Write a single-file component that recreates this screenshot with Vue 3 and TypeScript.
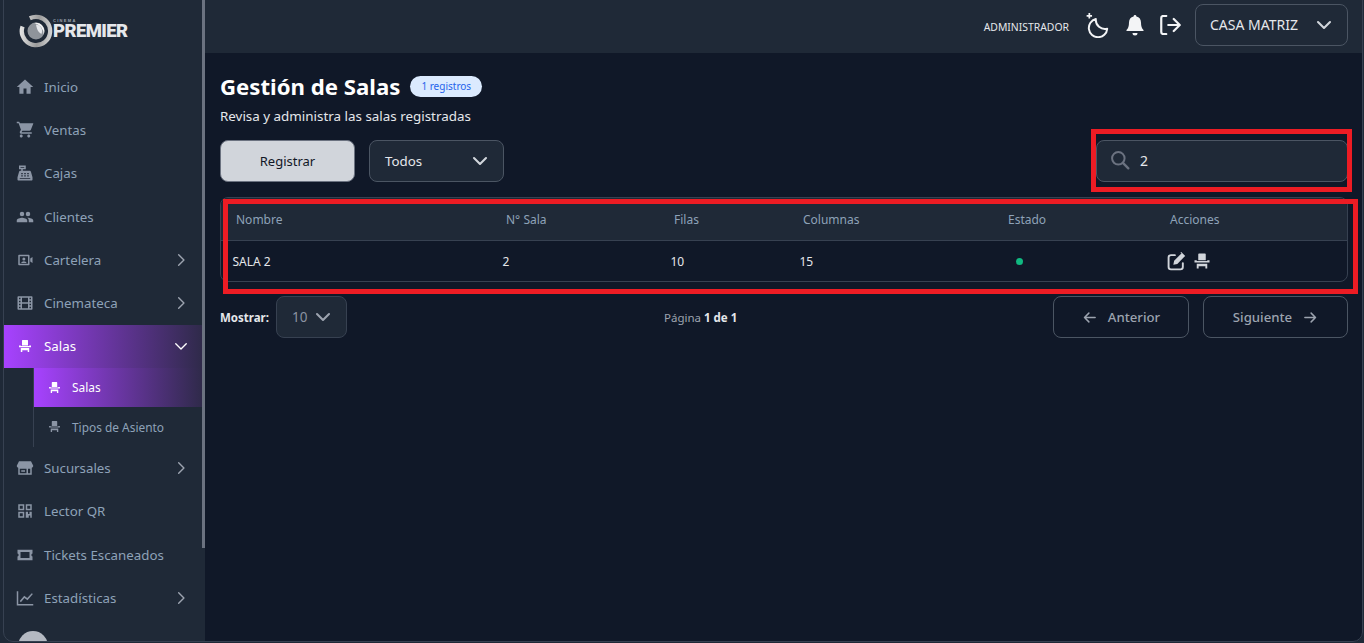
<script setup lang="ts">
type MenuItem = { label: string; icon: string; arrow?: boolean }

const topItems: MenuItem[] = [
  { label: 'Inicio', icon: 'home' },
  { label: 'Ventas', icon: 'cart' },
  { label: 'Cajas', icon: 'register' },
  { label: 'Clientes', icon: 'people' },
  { label: 'Cartelera', icon: 'camera', arrow: true },
  { label: 'Cinemateca', icon: 'film', arrow: true },
]

const bottomItems: MenuItem[] = [
  { label: 'Sucursales', icon: 'store', arrow: true },
  { label: 'Lector QR', icon: 'qr' },
  { label: 'Tickets Escaneados', icon: 'ticket' },
  { label: 'Estadísticas', icon: 'chart', arrow: true },
]

const icons: Record<string, string> = {
  home: 'M10 21v-7h4v7h5.500v-9H23L12 2 1 12h3.500v9z',
  cart: 'M7 18c-1.100 0-2 .9-2 2s.9 2 2 2 2-.9 2-2-.9-2-2-2zm10 0c-1.100 0-2 .9-2 2s.9 2 2 2 2-.9 2-2-.9-2-2-2zM1 1v2h2.500l3.100 8.600-1.300 2.400c-.2.3-.3.6-.3 1 0 1.100.9 2 2 2h14v-2H7.400l1.100-2h9.500c.7 0 1.400-.4 1.700-1L23 3.500V3H5.200l-.9-2z',
  register: 'M4 2h9v5H9v2h9c1 0 1.700.6 2 1.500l2 7V21c0 .6-.4 1-1 1H3c-.6 0-1-.4-1-1v-3.500l2-7C4.300 9.600 5 9 6 9h1V7H4zm2 2v1h5V4zm1 8v1.500h2V12zm4 0v1.500h2V12zm4 0v1.500h2V12zm-8 3v1.500h2V15zm4 0v1.500h2V15zm4 0v1.500h2V15zM5 19v1h14v-1z',
  people: 'M16 11a3 3 0 1 0 0-6 3 3 0 0 0 0 6zm-8 0a3 3 0 1 0 0-6 3 3 0 0 0 0 6zm0 2c-2.300 0-7 1.200-7 3.500V19h14v-2.500C15 14.200 10.300 13 8 13zm8 0h-1c1.200.8 2 2 2 3.500V19h6v-2.500c0-2.300-4.700-3.500-7-3.500z',
  camera: 'M4 5h13c.6 0 1 .4 1 1v12c0 .6-.4 1-1 1H4c-.6 0-1-.4-1-1V6c0-.6.4-1 1-1zm1 2v10h11V7zm5.500 1.500a2 2 0 1 1 0 4 2 2 0 0 1 0-4zM7 16c0-1.500 2-2.500 3.500-2.500S14 14.500 14 16zm12-6 3-2v8l-3-2z',
  film: 'M3 3h18c.6 0 1 .4 1 1v16c0 .6-.4 1-1 1H3c-.6 0-1-.4-1-1V4c0-.6.4-1 1-1zm1 2v2h2V5zm14 0v2h2V5zM8 5v6h8V5zM4 9v2h2V9zm14 0v2h2V9zM4 13v2h2v-2zm14 0v2h2v-2zM8 13v6h8v-6zm-4 4v2h2v-2zm14 0v2h2v-2z',
  store: 'M4 3h16l3 6c0 1.400-1 2.500-2 2.800V21H3v-9.200C2 11.500 1 10.400 1 9zm1 10v6h9v-6zm11 0v6h3v-6zM7 15h5v2H7z',
  qr: 'M3 3h8v8H3zm2 2v4h4V5zm8-2h8v8h-8zm2 2v4h4V5zM3 13h8v8H3zm2 2v4h4v-4zm8-2h3v3h2v-3h3v8h-2v-3h-2v3h-4z',
  ticket: 'M2 5h20v5c-1 .3-1.500 1-1.500 2s.5 1.700 1.500 2v5H2v-5c1-.3 1.500-1 1.500-2S3 10.300 2 10zm4 3v8h12V8z',
  chart: 'M1 3h2v17h20v2H1zm4 13 6-7 4 3 6-6.500 1.500 1.300-7.200 8.200-4-3-4.800 5.500z',
  chair: 'M8 2h8c.6 0 1 .4 1 1v8H7V3c0-.6.4-1 1-1zM2 11h3v1h14v-1h3v3H2zm3 4.500h14V22h-2.500v-3h-9v3H5z',
}

const columns = ['Nombre', 'N° Sala', 'Filas', 'Columnas', 'Estado', 'Acciones']
</script>

<template>
  <div class="app">
    <aside class="sidebar">
      <div class="logo">
        <svg class="logo-mark" viewBox="0 0 36 36">
          <defs>
            <linearGradient id="ring" x1="0" y1="0" x2="1" y2="1">
              <stop offset="0" stop-color="#f5f5f5" />
              <stop offset="0.55" stop-color="#9a9a9a" />
              <stop offset="1" stop-color="#e5e5e5" />
            </linearGradient>
          </defs>
          <circle cx="18" cy="18" r="15" fill="none" stroke="url(#ring)" stroke-width="4.500" stroke-dasharray="62 12" transform="rotate(-40 18 18)" />
          <circle cx="18" cy="18" r="9" fill="#8f949b" />
          <path d="M16 9.500a9 9 0 0 1 10 12.500A12 12 0 0 0 16 9.500z" fill="#f5f5f5" />
          <path d="M21 12a8 8 0 0 1 3 9c-3-1-5-4-6-10z" fill="#e5e7eb" />
        </svg>
        <div class="logo-text">
          <span class="logo-small">CINEMA</span>
          <span class="logo-big">PREMIER</span>
        </div>
      </div>

      <nav class="menu">
        <a v-for="item in topItems" :key="item.label" class="menu-item">
          <svg class="menu-icon" viewBox="0 0 24 24"><path :d="icons[item.icon]" fill="currentColor" fill-rule="evenodd" /></svg>
          <span class="menu-label">{{ item.label }}</span>
          <svg v-if="item.arrow" class="arrow" viewBox="0 0 24 24"><path d="M8 3l9 9-9 9" /></svg>
        </a>

        <a class="menu-item active">
          <svg class="menu-icon chair-icon" viewBox="-3 -3 30 30"><path :d="icons.chair" fill="currentColor" /></svg>
          <span class="menu-label">Salas</span>
          <svg class="arrow down" viewBox="0 0 24 24"><path d="M3 8l9 9 9-9" /></svg>
        </a>
        <div class="submenu">
          <a class="sub-item active">
            <svg class="sub-icon" viewBox="0 0 24 24"><path :d="icons.chair" fill="currentColor" /></svg>
            <span>Salas</span>
          </a>
          <a class="sub-item">
            <svg class="sub-icon" viewBox="0 0 24 24"><path :d="icons.chair" fill="currentColor" /></svg>
            <span>Tipos de Asiento</span>
          </a>
        </div>

        <a v-for="item in bottomItems" :key="item.label" class="menu-item">
          <svg class="menu-icon" viewBox="0 0 24 24"><path :d="icons[item.icon]" fill="currentColor" fill-rule="evenodd" /></svg>
          <span class="menu-label">{{ item.label }}</span>
          <svg v-if="item.arrow" class="arrow" viewBox="0 0 24 24"><path d="M8 3l9 9-9 9" /></svg>
        </a>
      </nav>

      <div class="avatar"></div>
      <div class="scrollbar"></div>
    </aside>

    <div class="content">
      <header class="topbar">
        <span class="role">ADMINISTRADOR</span>
        <svg class="top-icon moon" viewBox="0 0 24 24">
          <path d="M20.500 15.500A8.500 8.500 0 0 1 10 6.500a8.500 8.500 0 1 0 10.500 9z" fill="none" stroke="currentColor" stroke-width="1.800" stroke-linejoin="round" />
          <path d="M4 1v5M1.500 3.500h5" stroke="currentColor" stroke-width="1.600" />
        </svg>
        <svg class="top-icon bell" viewBox="3 2 18 21">
          <path d="M12 2c.8 0 1.400.6 1.400 1.400 3 .6 4.600 3 4.600 6 0 4 .8 5.600 2.500 7.600v1H3.500v-1C5.200 15 6 13.400 6 9.400c0-3 1.600-5.400 4.600-6C10.600 2.600 11.200 2 12 2zM9.500 20h5a2.500 2.500 0 0 1-5 0z" fill="currentColor" />
        </svg>
        <svg class="top-icon exit" viewBox="2 2 20.500 20">
          <path d="M8 3H5a2 2 0 0 0-2 2v14a2 2 0 0 0 2 2h3M10 12h11M15.500 6l6 6-6 6" fill="none" stroke="currentColor" stroke-width="2.200" stroke-linecap="round" stroke-linejoin="round" />
        </svg>
        <div class="branch">
          <span>CASA MATRIZ</span>
          <svg class="chevron" viewBox="0 0 24 24"><path d="M4 8l8 8 8-8" /></svg>
        </div>
      </header>

      <main class="page">
        <div class="title-row">
          <h1>Gestión de Salas</h1>
          <span class="badge">1 registros</span>
        </div>
        <p class="subtitle">Revisa y administra las salas registradas</p>

        <div class="toolbar">
          <button class="btn-register">Registrar</button>
          <div class="filter">
            <span>Todos</span>
            <svg class="chevron" viewBox="0 0 24 24"><path d="M4 8l8 8 8-8" /></svg>
          </div>
          <div class="search">
            <svg class="search-icon" viewBox="0 0 24 24">
              <circle cx="10" cy="10" r="7.500" fill="none" stroke="currentColor" stroke-width="2.400" />
              <path d="M15.500 15.500L22 22" stroke="currentColor" stroke-width="2.800" stroke-linecap="round" />
            </svg>
            <span>2</span>
            <div class="mark mark-search"></div>
          </div>
        </div>

        <div class="table-wrap">
          <div class="table-row table-head">
            <div v-for="col in columns" :key="col" class="head-cell">{{ col }}</div>
          </div>
          <div class="table-row table-body">
            <div class="cell">SALA 2</div>
            <div class="cell">2</div>
            <div class="cell">10</div>
            <div class="cell">15</div>
            <div class="cell state"><span class="dot"></span></div>
            <div class="cell actions">
              <svg class="act-edit" viewBox="0 0 24 24">
                <path d="M10 4H5a3 3 0 0 0-3 3v12a3 3 0 0 0 3 3h12a3 3 0 0 0 3-3v-5" fill="none" stroke="currentColor" stroke-width="2.400" stroke-linecap="round" />
                <path d="M8 16l1-5L18.500 1.500l4 4L13 15zM17 1l1-1 5 5-1 1z" fill="currentColor" />
              </svg>
              <svg class="act-chair" viewBox="0 0 24 24"><path :d="icons.chair" fill="currentColor" /></svg>
            </div>
          </div>
          <div class="mark mark-table"></div>
        </div>

        <div class="pager">
          <div class="show">
            <label>Mostrar:</label>
            <div class="size">
              <span>10</span>
              <svg class="chevron" viewBox="0 0 24 24"><path d="M4 8l8 8 8-8" /></svg>
            </div>
          </div>
          <div class="page-info">Página <b>1 de 1</b></div>
          <div class="pager-btns">
            <button class="btn-page prev">
              <svg viewBox="0 0 24 24"><path d="M21 12H4M11 5l-7 7 7 7" /></svg>
              Anterior
            </button>
            <button class="btn-page next">
              Siguiente
              <svg viewBox="0 0 24 24"><path d="M3 12h17M13 5l7 7-7 7" /></svg>
            </button>
          </div>
        </div>
      </main>
    </div>
    <div class="frame"></div>
  </div>
</template>

<style>
html,
body {
  margin: 0;
  height: 100%;
  overflow: hidden;
  background: #101828;
}
</style>

<style scoped>
.app {
  position: relative;
  display: flex;
  width: 1364px;
  height: 643px;
  overflow: hidden;
  font-family: "Noto Sans", "Open Sans", sans-serif;
  color: #e5e7eb;
  background: #101828;
}

/* window edge drawn over the whole page */
.frame {
  position: absolute;
  left: 3px;
  top: -12px;
  width: 1360px;
  height: 654px;
  box-sizing: border-box;
  border: 1px solid #374151;
  border-radius: 10px;
  box-shadow: 0 0 0 6px #1f2937;
  pointer-events: none;
}

.sidebar {
  position: relative;
  flex: 0 0 205px;
  box-sizing: border-box;
  height: 643px;
  padding-left: 3px;
  background: #1f2937;
  overflow: hidden;
}

.logo {
  display: flex;
  align-items: center;
  height: 65.500px;
  padding-left: 16px;
  padding-bottom: 4px;
  box-sizing: border-box;
}

.logo-mark {
  width: 34px;
  height: 34px;
  flex: none;
}

.logo-text {
  display: flex;
  flex-direction: column;
  margin-top: -3px;
}

.logo-small {
  font-family: "Liberation Sans", sans-serif;
  font-size: 4px;
  font-weight: 700;
  line-height: 5px;
  letter-spacing: 1.300px;
  color: #9ca3af;
}

.logo-big {
  font-family: "Roboto", sans-serif;
  font-size: 18.500px;
  font-weight: 900;
  line-height: 17px;
  letter-spacing: -0.600px;
  color: #e5e7eb;
}

.menu {
  display: flex;
  flex-direction: column;
  width: 199px;
}

.menu-item {
  display: flex;
  align-items: center;
  height: 43.200px;
  padding-left: 13px;
  padding-right: 14px;
  box-sizing: border-box;
  color: #8ea2b8;
  font-size: 13.300px;
}

.menu-item.active {
  height: 43px;
  margin-left: 1px;
  padding-left: 12px;
  color: #fff;
  background: linear-gradient(90deg, #a742ff 0%, #2f2a4a 100%);
}

.menu-icon {
  width: 18px;
  height: 18px;
  flex: none;
  color: #8b95a5;
}

.active .menu-icon {
  color: #fff;
}

.menu-label {
  margin-left: 10px;
  flex: 1;
  white-space: nowrap;
}

.arrow {
  width: 14px;
  height: 14px;
  flex: none;
  fill: none;
  stroke: #9ca3af;
  stroke-width: 2.400;
  stroke-linecap: round;
  stroke-linejoin: round;
}

.arrow.down {
  stroke: #fff;
}

.submenu {
  display: flex;
  flex-direction: column;
  margin-left: 30px;
  border-left: 1px solid #374151;
  height: 79px;
}

.sub-item {
  display: flex;
  align-items: center;
  height: 39.500px;
  padding-left: 14px;
  color: #8ea2b8;
  font-size: 11.900px;
}

.sub-item.active {
  color: #fff;
  background: linear-gradient(90deg, #a742ff 0%, #2f2a4a 100%);
}

.sub-icon {
  width: 13px;
  height: 13px;
  flex: none;
  margin-right: 11px;
  color: #8b95a5;
}

.sub-item.active .sub-icon {
  color: #fff;
}

.avatar {
  position: absolute;
  left: 18px;
  top: 631px;
  width: 30px;
  height: 30px;
  border-radius: 50%;
  background: #b4b9c2;
}

.scrollbar {
  position: absolute;
  right: 0;
  top: 0;
  width: 3px;
  height: 548px;
  background: #6b7280;
}

.content {
  flex: 1;
  min-width: 0;
  display: flex;
  flex-direction: column;
}

.topbar {
  display: flex;
  align-items: center;
  height: 53px;
  box-sizing: border-box;
  padding-right: 16px;
  padding-bottom: 3px;
  background: #1f2937;
  justify-content: flex-end;
  color: #f3f4f6;
}

.role {
  font-size: 10.400px;
  color: #e5e7eb;
  margin-right: 16px;
  margin-top: 3px;
}

.top-icon {
  flex: none;
  color: #f3f4f6;
}

.moon {
  width: 26px;
  height: 26px;
  margin-right: 15px;
}

.bell {
  width: 18px;
  height: 21px;
  margin-right: 16px;
}

.exit {
  width: 21px;
  height: 20px;
  margin-right: 14px;
}

.branch {
  display: flex;
  align-items: center;
  justify-content: space-between;
  width: 153px;
  height: 42px;
  box-sizing: border-box;
  padding: 0 14px 1px;
  border: 1px solid #4b5563;
  border-radius: 8px;
  background: #1f2937;
  font-size: 14px;
  color: #e5e7eb;
}

.chevron {
  width: 18px;
  height: 18px;
  flex: none;
  fill: none;
  stroke: #d1d5db;
  stroke-width: 2.800;
  stroke-linecap: round;
  stroke-linejoin: round;
}

.page {
  flex: 1;
  padding: 16px 16px 0 15px;
  min-height: 0;
}

.title-row {
  display: flex;
  align-items: center;
  height: 36px;
}

h1 {
  margin: 0;
  font-size: 22.200px;
  font-weight: 700;
  line-height: 36px;
  color: #fff;
}

.badge {
  margin-left: 10px;
  margin-top: -1px;
  padding: 0 11px;
  height: 21px;
  line-height: 21px;
  border-radius: 11px;
  background: #dbeafe;
  color: #2563eb;
  font-size: 10px;
}

.subtitle {
  margin: 0;
  height: 20px;
  line-height: 19px;
  margin-top: 2px;
  font-size: 13.400px;
  color: #e5e7eb;
}

.toolbar {
  display: flex;
  align-items: center;
  margin-top: 13px;
  height: 42px;
}

.btn-register {
  width: 135px;
  height: 42px;
  padding-bottom: 2px;
  border: 1px solid #6b7280;
  border-radius: 8px;
  background: #d1d5db;
  color: #111827;
  font-family: inherit;
  font-size: 13px;
}

.filter {
  display: flex;
  align-items: center;
  justify-content: space-between;
  width: 135px;
  height: 42px;
  margin-left: 14px;
  padding: 0 14px 1px 15px;
  box-sizing: border-box;
  border: 1px solid #4b5563;
  border-radius: 8px;
  background: #1f2937;
  font-size: 13.300px;
  color: #e5e7eb;
}

.search {
  position: relative;
  display: flex;
  align-items: center;
  width: 252px;
  height: 42px;
  margin-left: auto;
  padding-left: 13px;
  padding-bottom: 2px;
  box-sizing: border-box;
  border: 1px solid #4b5563;
  border-radius: 8px;
  background: #1f2937;
  font-size: 14px;
  color: #e5e7eb;
}

.search-icon {
  width: 20px;
  height: 20px;
  margin-right: 10px;
  color: #6b7280;
}

.mark {
  position: absolute;
  box-sizing: border-box;
  border: 5px solid #ed1c24;
  pointer-events: none;
}

.mark-search {
  left: -6px;
  top: -12px;
  width: 261px;
  height: 63px;
}

.mark-table {
  left: 2px;
  top: 1px;
  width: 1135px;
  height: 95px;
}

.table-wrap {
  position: relative;
  margin-top: 15px;
  box-sizing: border-box;
  height: 85px;
  border: 1px solid #374151;
  border-radius: 8px;
  overflow: visible;
}

.table-row {
  display: grid;
  grid-template-columns: 270px 168px 129px 205px 162px 192px;
  align-items: center;
}

.table-head {
  height: 43px;
  background: #1f2937;
  border-bottom: 1px solid #374151;
  border-radius: 8px 8px 0 0;
  box-sizing: border-box;
}

.head-cell {
  padding-left: 15px;
  font-size: 12px;
  color: #8ea2b8;
}

.table-body {
  height: 40px;
}

.cell {
  padding-left: 11.500px;
  font-size: 12px;
  color: #e5e7eb;
}

.state {
  padding-left: 23px;
  display: flex;
  align-items: center;
}

.dot {
  width: 7px;
  height: 7px;
  border-radius: 50%;
  background: #10b981;
}

.actions {
  display: flex;
  align-items: center;
  gap: 7px;
}

.act-edit {
  width: 19px;
  height: 19px;
  color: #d1d5db;
}

.act-chair {
  width: 18px;
  height: 18px;
  color: #d1d5db;
}

.pager {
  position: relative;
  display: flex;
  align-items: center;
  justify-content: space-between;
  margin-top: 14px;
  height: 42px;
}

.show {
  display: flex;
  align-items: center;
}

.show label {
  font-size: 11.500px;
  font-weight: 700;
  color: #e5e7eb;
}

.size {
  display: flex;
  align-items: center;
  justify-content: space-between;
  width: 71px;
  height: 42px;
  margin-left: 7px;
  padding: 0 14px 0 15px;
  box-sizing: border-box;
  border: 1px solid #374151;
  border-radius: 8px;
  background: #1f2937;
  font-size: 13.500px;
  color: #8b93a1;
}

.size .chevron {
  stroke: #9ca3af;
}

.page-info {
  position: absolute;
  left: 444px;
  font-size: 11.500px;
  color: #9ca3af;
}

.page-info b {
  color: #e5e7eb;
}

.pager-btns {
  display: flex;
  gap: 14px;
}

.btn-page {
  display: flex;
  align-items: center;
  justify-content: center;
  gap: 11px;
  height: 42px;
  box-sizing: border-box;
  border: 1px solid #4b5563;
  border-radius: 8px;
  background: transparent;
  color: #9ca3af;
  font-family: inherit;
  font-size: 13.200px;
  font-weight: 500;
}

.btn-page.prev {
  width: 136px;
}

.btn-page.next {
  width: 145px;
}

.btn-page svg {
  width: 15px;
  height: 15px;
  fill: none;
  stroke: #9ca3af;
  stroke-width: 2.400;
  stroke-linecap: round;
  stroke-linejoin: round;
}
</style>
